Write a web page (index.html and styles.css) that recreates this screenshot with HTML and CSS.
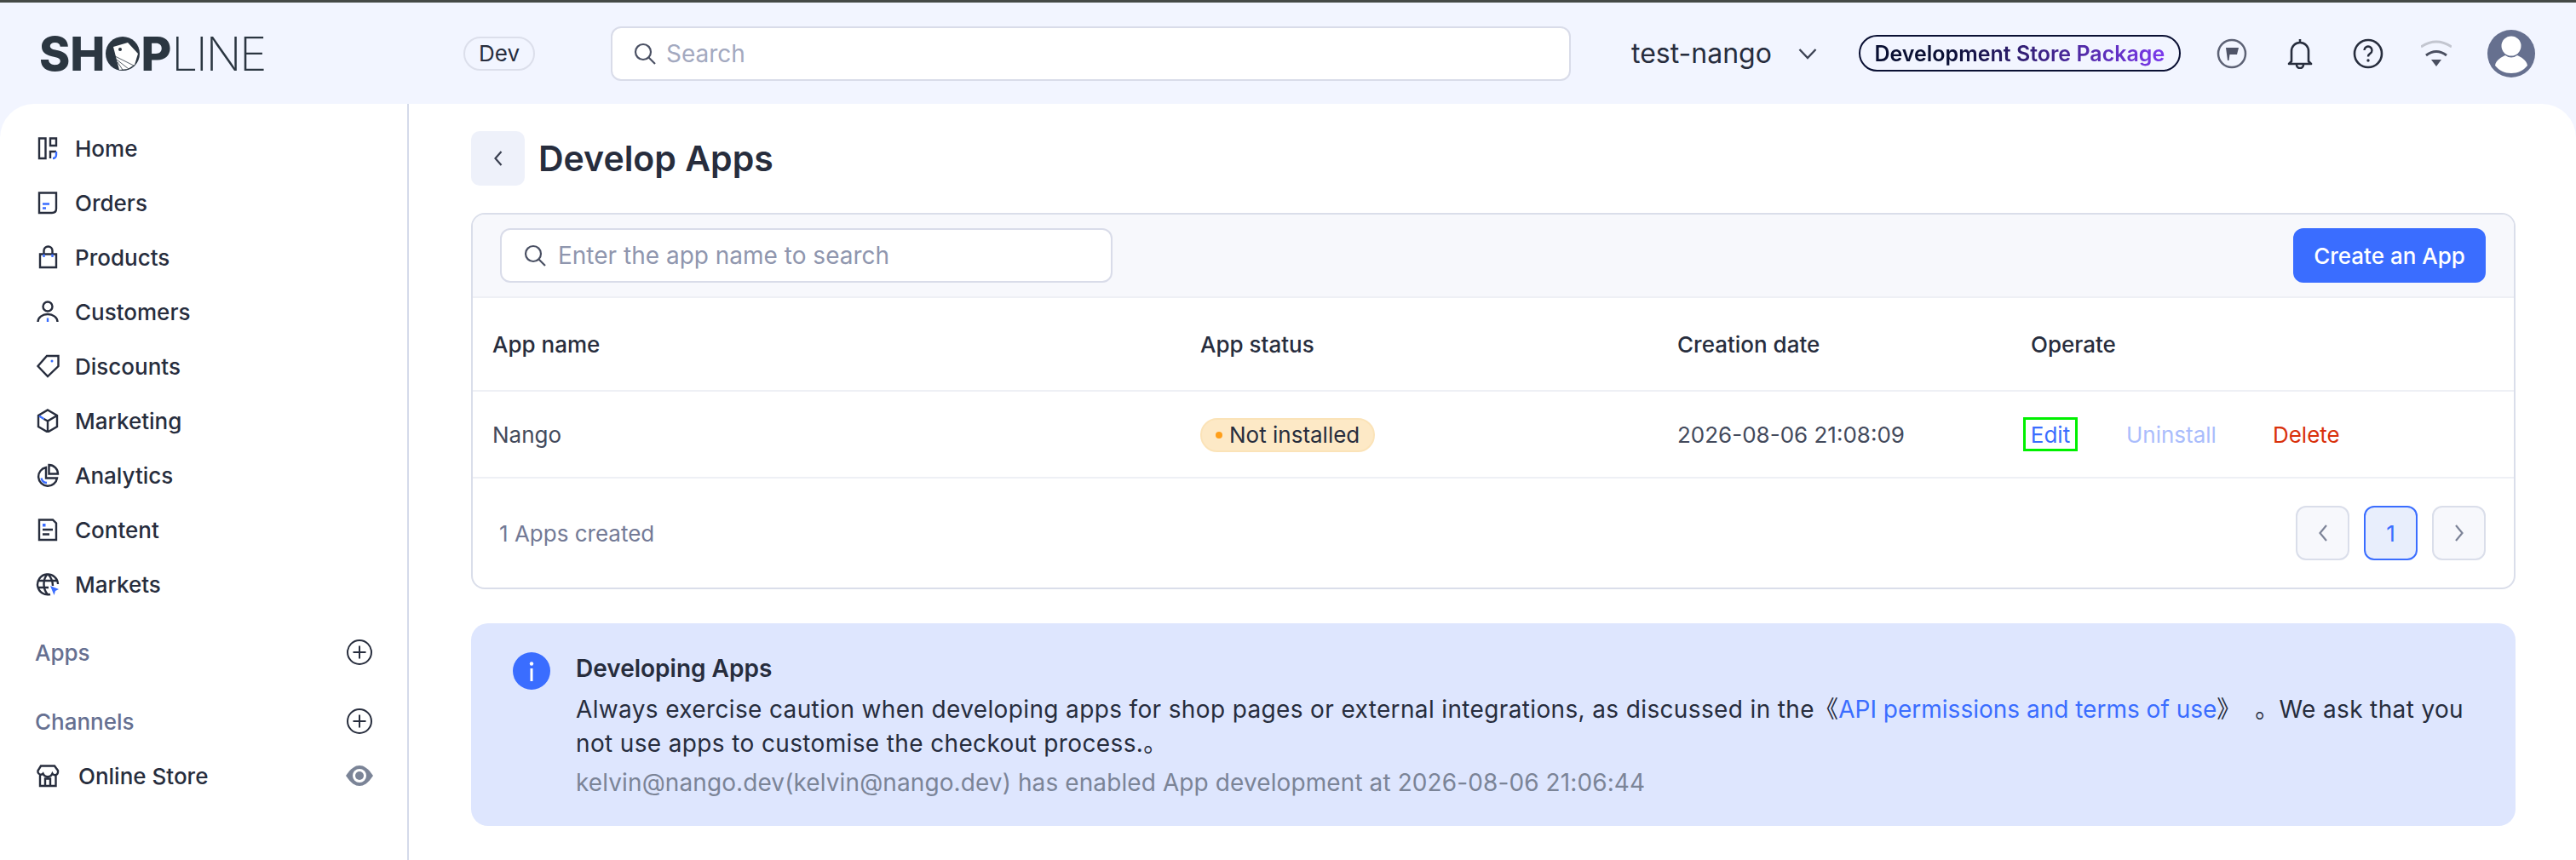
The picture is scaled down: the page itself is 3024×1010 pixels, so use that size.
FILE: index.html
```html
<!DOCTYPE html>
<html lang="en">
  <head>
    <meta charset="UTF-8" />
    <title>Develop Apps</title>
    <link rel="stylesheet" href="styles.css">
  </head>
  <body>
    <header class="topbar">
      <div class="logo">
        <span class="logo-bold">SH</span>
        <svg class="logo-o" viewBox="0 0 40 40">
          <circle cx="20" cy="20" r="20" fill="#2b3641"/>
          <path d="M9 12 L26 7 L38 20 L34 33 L26 38 L16 39 Z" fill="#fff"/>
          <path d="M11 23 L33 34 M13 27 L27 38 M14 30 L20 39" stroke="#2b3641" stroke-width="0.8"/>
          <circle cx="17" cy="15" r="2" fill="#2b3641"/>
        </svg>
        <span class="logo-bold">P</span>
        <span class="logo-thin">LINE</span>
      </div>
      <span class="dev-tag">Dev</span>
      <div class="top-search">
        <svg class="icon-search" viewBox="0 0 28 28"><circle cx="12" cy="12" r="9"/><path d="M18.5 18.5 L26 26"/></svg>
        <span>Search</span>
      </div>
      <div class="store-name">test-nango</div>
      <svg class="store-arrow" viewBox="0 0 22 14"><path d="M1.5 2 L11 12 L20.5 2"/></svg>
      <div class="package"><span>Development Store Package</span></div>
      <div class="top-icons">
        <svg class="top-icon" viewBox="0 0 36 36"><circle cx="18" cy="18" r="16" fill="none" stroke="#5d6275" stroke-width="2.5"/><path d="M11 11 H26 L24 19 H15.500 L14.500 26 H13 Z" fill="#4f5468"/></svg>
        <svg class="top-icon" viewBox="0 0 36 36"><path d="M18 1 V5 M8 27 V15 a10 10 0 0 1 20 0 V27 L31 30 H5 Z M14 31 a4 4 0 0 0 8 0" fill="none" stroke="#272d3d" stroke-width="2.6" stroke-linejoin="round"/></svg>
        <svg class="top-icon" viewBox="0 0 36 36"><circle cx="18" cy="18" r="16" fill="none" stroke="#272d3d" stroke-width="2.6"/><path d="M13.500 14 a4.500 4.500 0 1 1 6.800 3.900 c-1.600 1 -2.300 1.800 -2.300 3.600" fill="none" stroke="#272d3d" stroke-width="2.4"/><circle cx="18" cy="26" r="1.700" fill="#272d3d"/></svg>
        <svg class="top-icon" viewBox="0 0 36 36"><path d="M0 10 Q18 -2 36 10" fill="none" stroke="#c3c6d0" stroke-width="3"/><path d="M6 20 Q18 11 30 20" fill="none" stroke="#4a4f60" stroke-width="3"/><path d="M12 25 H24 L18 33 Z" fill="#4a4f60"/></svg>
        <svg class="avatar" viewBox="0 0 56 56"><circle cx="28" cy="28" r="28" fill="#66708f"/><circle cx="28" cy="19" r="11.500" fill="#fff"/><path d="M9 42 C10 35 17 32 21 30 Q28 35 35 30 C39 32 46 35 47 42 C42 48 36 51 28 51 C20 51 14 48 9 42 Z" fill="#fff"/></svg>
      </div>
    </header>

    <div class="frame">
      <aside class="sidebar">
        <nav class="nav-list">
          <a class="nav-item">
            <svg class="nav-icon" viewBox="0 0 28 28"><path d="M4 2.500 H11.500 V26 H4 Z M17 2.500 H24 V11 H17 Z M17 26 V18 H24"/><path class="blue" d="M24 18 V22 A4 4 0 0 1 20 26"/></svg>
            Home
          </a>
          <a class="nav-item">
            <svg class="nav-icon" viewBox="0 0 28 28"><path d="M4 2.500 H24 V21 Q24 26 19 26 H4 Z"/><path class="blue" d="M8 15.500 H16 M8 20.500 H12"/></svg>
            Orders
          </a>
          <a class="nav-item">
            <svg class="nav-icon" viewBox="0 0 28 28"><path d="M5 10.500 H24 V26 H5 Z M9.500 10.500 V6.500 A5 5 0 0 1 19.500 6.500 V10.500"/><path class="blue" d="M9.500 10.500 V14 M19.500 10.500 V14"/></svg>
            Products
          </a>
          <a class="nav-item">
            <svg class="nav-icon" viewBox="0 0 28 28"><circle cx="14" cy="8" r="5.500"/><path d="M2.500 26 A11.500 9 0 0 1 25.500 26"/><path class="blue" d="M14 21.500 V26"/></svg>
            Customers
          </a>
          <a class="nav-item">
            <svg class="nav-icon" viewBox="0 0 28 28"><path d="M26.500 2 H13 L2.500 14 L14 26 L26.500 14 Z"/><circle class="blue-dot" cx="19" cy="8" r="1.500"/></svg>
            Discounts
          </a>
          <a class="nav-item">
            <svg class="nav-icon" viewBox="0 0 28 28"><path d="M14 1.500 L25 8 V21 L14 27.500 L3 21 V8 Z M25 8 L14 14.500 V27.500 M14 14.500 L9.500 12"/><path class="blue" d="M4 8.500 L9.500 12"/></svg>
            Marketing
          </a>
          <a class="nav-item">
            <svg class="nav-icon" viewBox="0 0 28 28"><path d="M12 5 A11 11 0 1 0 25 17.500 H12 Z M15.500 2 A10.500 10.500 0 0 1 26 12.500 H15.500 Z"/><path class="blue" d="M6.500 17.500 A7 7 0 0 0 13 23"/></svg>
            Analytics
          </a>
          <a class="nav-item">
            <svg class="nav-icon" viewBox="0 0 28 28"><path d="M4 2.500 H20 L24 6.500 V26 H4 Z M8 14 H20 M8 19.500 H16"/><rect class="blue-fill" x="8" y="7" width="3.500" height="3.500"/></svg>
            Content
          </a>
          <a class="nav-item">
            <svg class="nav-icon" viewBox="0 0 28 28"><path d="M17 26 A12 12 0 1 1 26 14 M2.500 10 H25 M2.500 18 H15 M14 2 C8 8 8 20 14 26 M14 2 C19 7 20 12 20 16"/><path class="blue-fill" d="M17 16 L27 20 L23 22 L21.500 27 Z"/></svg>
            Markets
          </a>
        </nav>
        <div class="nav-section apps-section">
          <span>Apps</span>
          <svg class="plus" viewBox="0 0 30 30"><circle cx="15" cy="15" r="14"/><path d="M15 7.500 V22.500 M7.500 15 H22.500"/></svg>
        </div>
        <div class="nav-section channels-section">
          <span>Channels</span>
          <svg class="plus" viewBox="0 0 30 30"><circle cx="15" cy="15" r="14"/><path d="M15 7.500 V22.500 M7.500 15 H22.500"/></svg>
        </div>
        <a class="nav-item store-item">
          <svg class="nav-icon" viewBox="0 0 28 28"><path d="M6 2.500 H22 L26 8 V10 A3.500 3.500 0 0 1 19.500 11.500 A6 6 0 0 1 8.500 11.500 A3.500 3.500 0 0 1 2.500 10 V8 Z M5 13 V26 H23.500 V13 M11 26 V17.500 H17 V26"/></svg>
          <span class="store-label">Online Store</span>
          <svg class="eye" viewBox="0 0 32 24"><path d="M0 12 C6 3 11 0 16 0 C21 0 26 3 32 12 C26 21 21 24 16 24 C11 24 6 21 0 12 Z" fill="#7b8497"/><circle cx="16" cy="12" r="8" fill="#fff"/><circle cx="16" cy="12" r="5" fill="#7b8497"/></svg>
        </a>
      </aside>

      <main class="content">
        <div class="page-head">
          <span class="back-btn"><svg viewBox="0 0 12 20"><path d="M9.500 2 L2.500 10 L9.500 18"/></svg></span>
          <h1>Develop Apps</h1>
        </div>

        <section class="card">
          <div class="card-tools">
            <div class="app-search">
              <svg class="icon-search" viewBox="0 0 28 28"><circle cx="12" cy="12" r="9"/><path d="M18.5 18.5 L26 26"/></svg>
              <span>Enter the app name to search</span>
            </div>
            <span class="btn-create">Create an App</span>
          </div>
          <div class="row row-head">
            <div>App name</div>
            <div>App status</div>
            <div>Creation date</div>
            <div>Operate</div>
          </div>
          <div class="row row-body">
            <div>Nango</div>
            <div><span class="badge"><i></i>Not installed</span></div>
            <div>2026-08-06 21:08:09</div>
            <div class="ops">
              <a class="op-edit">Edit</a>
              <a class="op-uninstall">Uninstall</a>
              <a class="op-delete">Delete</a>
            </div>
          </div>
          <div class="card-foot">
            <span class="count">1 Apps created</span>
            <div class="pager">
              <span class="page-btn"><svg viewBox="0 0 12 20"><path d="M10 1 L2.500 10 L10 19"/></svg></span>
              <span class="page-btn active">1</span>
              <span class="page-btn"><svg viewBox="0 0 12 20"><path d="M2 1 L9.500 10 L2 19"/></svg></span>
            </div>
          </div>
        </section>

        <section class="notice">
          <svg class="notice-icon" viewBox="0 0 44 44"><circle cx="22" cy="22" r="22" fill="#3a6dff"/><circle cx="22" cy="13.500" r="2.200" fill="#fff"/><rect x="20.500" y="19" width="3" height="15" fill="#fff"/></svg>
          <div class="notice-text">
            <h2>Developing Apps</h2>
            <p class="notice-body">Always exercise caution when developing apps for shop pages or external integrations, as discussed in the《<a>API permissions and terms of use</a>》&nbsp; 。We ask that you not use apps to customise the checkout process.。</p>
            <p class="notice-meta">kelvin@nango.dev(kelvin@nango.dev) has enabled App development at 2026-08-06 21:06:44</p>
          </div>
        </section>
      </main>
    </div>
  </body>
</html>
```

FILE: styles.css
```css
* {
  box-sizing: border-box;
  margin: 0;
}
html,
body {
  height: 1010px;
  overflow: hidden;
}
body {
  background: #f2f5ff;
  color: #272d3d;
  font-family: Inter, "Noto Sans CJK SC", sans-serif;
  font-size: 26px;
}

/* top bar */
.topbar {
  display: flex;
  align-items: center;
  height: 122px;
  padding-left: 46px;
  border-top: 3px solid #454a47;
}
.logo {
  display: flex;
  align-items: center;
  width: 498px;
  color: #2b3641;
  font-size: 55px;
  line-height: 56px;
}
.logo-bold {
  font-weight: 800;
}
.logo-o {
  width: 40px;
  height: 40px;
  margin: 0 1px;
}
.logo-thin {
  font-weight: 200;
  letter-spacing: -2.500px;
}
.dev-tag {
  display: flex;
  align-items: center;
  justify-content: center;
  width: 84px;
  height: 40px;
  border: 2px solid #dcdfeb;
  border-radius: 20px;
  font-size: 26px;
}
.top-search {
  display: flex;
  align-items: center;
  gap: 11px;
  width: 1127px;
  height: 64px;
  margin-left: 89px;
  padding-left: 24px;
  background: #fff;
  border: 2px solid #d9dce9;
  border-radius: 12px;
  color: #a3a9bf;
  font-size: 28px;
}
.icon-search {
  flex: none;
  width: 28px;
  height: 28px;
  fill: none;
  stroke: #4a5063;
  stroke-width: 2.2;
}
.store-name {
  margin-left: 71px;
  font-size: 32px;
}
.store-arrow {
  width: 22px;
  height: 14px;
  margin-left: 31px;
  fill: none;
  stroke: #3d4354;
  stroke-width: 2.4;
}
.package {
  display: flex;
  align-items: center;
  justify-content: center;
  width: 378px;
  height: 43px;
  margin-left: 49px;
  border: 2.500px solid #0a1033;
  border-radius: 22px;
  font-size: 25px;
  font-weight: 600;
}
.package span {
  background: linear-gradient(90deg, #0a1033 25%, #7c3aed 100%);
  -webkit-background-clip: text;
  background-clip: text;
  color: transparent;
}
.top-icons {
  display: flex;
  align-items: center;
  gap: 44px;
  margin-left: 42px;
}
.top-icon {
  width: 36px;
  height: 36px;
}
.avatar {
  width: 56px;
  height: 56px;
  margin-left: -2px;
}

/* frame */
.frame {
  display: flex;
  height: 888px;
  background: #fff;
  border-radius: 40px 40px 0 0;
}
.sidebar {
  flex: none;
  width: 480px;
  padding-top: 20px;
  border-right: 2px solid #d5daea;
}
.nav-item {
  display: flex;
  align-items: center;
  gap: 18px;
  height: 64px;
  padding-left: 42px;
  font-weight: 500;
}
.nav-icon {
  flex: none;
  width: 28px;
  height: 28px;
  fill: none;
  stroke: #272d3d;
  stroke-width: 2.4;
}
.nav-icon .blue {
  stroke: #3a6dff;
}
.nav-icon .blue-dot,
.nav-icon .blue-fill {
  fill: #3a6dff;
  stroke: none;
}
.nav-section {
  display: flex;
  align-items: center;
  justify-content: space-between;
  height: 64px;
  padding: 0 41px;
  color: #667091;
  font-weight: 500;
}
.apps-section {
  margin-top: 16px;
}
.channels-section {
  margin-top: 17px;
}
.plus {
  width: 30px;
  height: 30px;
  fill: none;
  stroke: #272d3d;
  stroke-width: 2;
}
.store-item {
  gap: 22px;
  padding-right: 40px;
}
.store-label {
  flex: 1;
}
.eye {
  width: 32px;
  height: 24px;
}

/* main column */
.content {
  flex: 1;
  padding: 32px 71px 0 73px;
}
.page-head {
  display: flex;
  align-items: center;
  gap: 16px;
}
.back-btn {
  display: flex;
  align-items: center;
  justify-content: center;
  width: 63px;
  height: 64px;
  background: #eef1fa;
  border-radius: 10px;
}
.back-btn svg {
  width: 12px;
  height: 20px;
  fill: none;
  stroke: #3a4050;
  stroke-width: 2.2;
}
h1 {
  font-size: 41px;
  font-weight: 600;
}

.card {
  margin-top: 32px;
  background: #fff;
  border: 2px solid #dadeea;
  border-radius: 16px;
  overflow: hidden;
}
.card-tools {
  display: flex;
  align-items: center;
  justify-content: space-between;
  height: 98px;
  padding: 0 33px 0 32px;
  background: #f7f8fc;
  border-bottom: 2px solid #eef0f5;
}
.app-search {
  display: flex;
  align-items: center;
  gap: 13px;
  width: 719px;
  height: 64px;
  padding-left: 25px;
  background: #fff;
  border: 2px solid #d9dce9;
  border-radius: 12px;
  color: #8f96ae;
  font-size: 28px;
}
.btn-create {
  display: flex;
  align-items: center;
  justify-content: center;
  width: 226px;
  height: 64px;
  background: #3a6dff;
  border-radius: 12px;
  color: #fff;
  font-weight: 500;
}
.row {
  display: grid;
  grid-template-columns: 831px 560px 415px 1fr;
  align-items: center;
  padding-left: 23px;
  border-bottom: 2px solid #eef0f5;
}
.row-head {
  height: 110px;
  font-weight: 500;
}
.row-body {
  height: 102px;
  color: #434a5c;
}
.badge {
  display: inline-flex;
  align-items: center;
  gap: 8px;
  height: 40px;
  padding: 0 16px;
  background: #fde9c6;
  border: 2px solid #fbe3b8;
  border-radius: 20px;
  color: #272d3d;
}
.badge i {
  width: 8px;
  height: 8px;
  background: #ff9f1a;
  border-radius: 50%;
}
.ops {
  display: flex;
  align-items: center;
}
.op-edit {
  display: flex;
  align-items: center;
  justify-content: center;
  width: 64px;
  height: 40px;
  margin-left: -9px;
  border: 3px solid #00f000;
  color: #3a6dff;
}
.op-uninstall {
  margin-left: 57px;
  color: #aabdfc;
}
.op-delete {
  margin-left: 66px;
  color: #d9310b;
}
.card-foot {
  display: flex;
  align-items: center;
  justify-content: space-between;
  height: 128px;
  padding: 0 33px 0 31px;
}
.count {
  color: #737a96;
}
.pager {
  display: flex;
  gap: 17px;
}
.page-btn {
  display: flex;
  align-items: center;
  justify-content: center;
  width: 63px;
  height: 64px;
  background: #f7f8fc;
  border: 2px solid #dadeea;
  border-radius: 12px;
}
.page-btn svg {
  width: 12px;
  height: 20px;
  fill: none;
  stroke: #7d8498;
  stroke-width: 2.2;
}
.page-btn.active {
  background: #e8eefc;
  border-color: #3a6dff;
  color: #3a6dff;
}

.notice {
  display: flex;
  gap: 30px;
  height: 238px;
  margin-top: 40px;
  padding: 34px 50px 0 49px;
  background: #dee6fe;
  border-radius: 20px;
}
.notice-icon {
  flex: none;
  width: 44px;
  height: 44px;
}
.notice-text {
  color: #272d3d;
  font-size: 28px;
  line-height: 40px;
}
.notice-text h2 {
  margin-top: -1px;
  margin-bottom: 8px;
  font-size: 28px;
  font-weight: 600;
}
.notice-body {
  letter-spacing: 0.360px;
}
.notice-body a {
  color: #3a6dff;
  letter-spacing: 0;
}
.notice-meta {
  margin-top: 6px;
  color: #7b8497;
  letter-spacing: 0.100px;
}
```
